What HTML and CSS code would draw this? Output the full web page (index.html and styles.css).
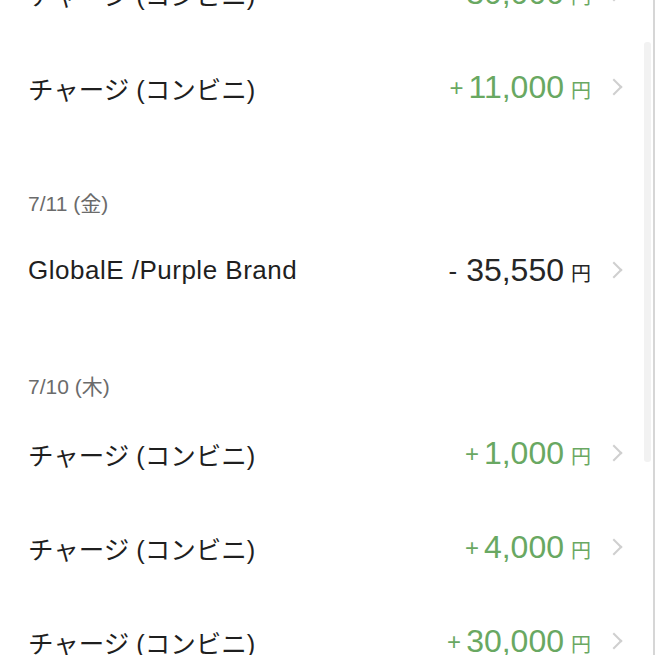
FILE: index.html
```html
<!DOCTYPE html>
<html lang="ja">
<head>
<meta charset="utf-8">
<link rel="stylesheet" href="styles.css">
</head>
<body>
<div class="screen">
  <div class="list">
    <section class="group first">
      <div class="row"><span class="title">チャージ (コンビニ)</span><span class="amount plus"><span class="sign">+</span>30,000<span class="yen">円</span></span><span class="chev"></span></div>
      <div class="row"><span class="title">チャージ (コンビニ)</span><span class="amount plus"><span class="sign">+</span>11,000<span class="yen">円</span></span><span class="chev"></span></div>
    </section>
    <section class="group">
      <div class="date">7/11 (金)</div>
      <div class="row"><span class="title latin">GlobalE /Purple Brand</span><span class="amount minus"><span class="sign">-</span>35,550<span class="yen">円</span></span><span class="chev"></span></div>
    </section>
    <section class="group">
      <div class="date">7/10 (木)</div>
      <div class="row"><span class="title">チャージ (コンビニ)</span><span class="amount plus"><span class="sign">+</span>1,000<span class="yen">円</span></span><span class="chev"></span></div>
      <div class="row"><span class="title">チャージ (コンビニ)</span><span class="amount plus"><span class="sign">+</span>4,000<span class="yen">円</span></span><span class="chev"></span></div>
      <div class="row"><span class="title">チャージ (コンビニ)</span><span class="amount plus"><span class="sign">+</span>30,000<span class="yen">円</span></span><span class="chev"></span></div>
    </section>
  </div>
  <div class="thumb"></div>
</div>
</body>
</html>
```
FILE: styles.css
```css
html, body {
  margin: 0;
  padding: 0;
  background: #fff;
}
body {
  font-family: "Liberation Sans", "Noto Sans CJK JP", sans-serif;
  color: #222;
}
.screen {
  position: relative;
  width: 653px;
  height: 655px;
  overflow: hidden;
  border-right: 2px solid #d6d6d6;
}
.list {
  margin-top: -54px;
  display: flex;
  flex-direction: column;
  gap: 47px;
}
.group {
  display: flex;
  flex-direction: column;
}
.date {
  height: 42px;
  display: flex;
  align-items: center;
  padding-left: 28px;
  font-size: 21px;
  color: #6b6b6b;
}
.row {
  height: 94px;
  display: flex;
  align-items: center;
  padding-left: 28px;
  padding-right: 33px;
}
.title {
  flex: 1;
  font-size: 25.5px;
  color: #1f1f1f;
}
.title.latin {
  font-size: 26px;
  letter-spacing: 0.5px;
}
.amount {
  font-size: 32px;
  display: flex;
  align-items: baseline;
}
.amount.plus { color: #69a862; }
.amount.minus { color: #262626; }
.sign {
  align-self: center;
  font-size: 24px;
  line-height: 1;
  margin-right: 5px;
  margin-top: 2px;
}
.minus .sign {
  font-size: 26px;
  margin-right: 9px;
}
.yen {
  font-size: 20px;
  margin-left: 7px;
}
.chev {
  width: 10px;
  height: 10px;
  border-top: 2px solid #cfcfcf;
  border-right: 2px solid #cfcfcf;
  transform: rotate(45deg);
  margin-left: 17px;
}
.thumb {
  position: absolute;
  right: 2px;
  top: 42px;
  width: 7px;
  height: 420px;
  background: #f2f2f2;
  border-radius: 3px;
}
```
